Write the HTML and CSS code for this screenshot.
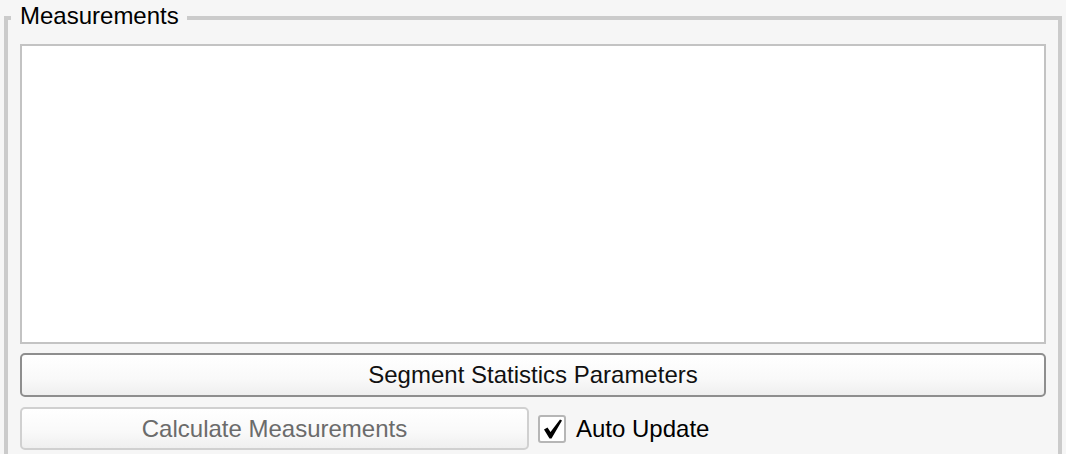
FILE: index.html
```html
<!DOCTYPE html>
<html>
<head>
<meta charset="utf-8">
<link rel="stylesheet" href="styles.css">
</head>
<body>
<fieldset class="group">
  <legend class="group-title">Measurements</legend>
  <div class="list-box"></div>
  <button class="btn btn-primary">Segment Statistics Parameters</button>
  <div class="row">
    <button class="btn btn-disabled" disabled>Calculate Measurements</button>
    <label class="check">
      <span class="check-box">
        <svg width="24" height="24" viewBox="0 0 24 24"><path d="M4 12.5 L7.5 10.5 L10.5 15 L20 2.5 L22 3.5 L11.5 21.5 L9.5 21.5 Z" fill="#000"/></svg>
      </span>
      <span class="check-label">Auto Update</span>
    </label>
  </div>
</fieldset>
</body>
</html>
```

FILE: styles.css
```css
html, body {
  margin: 0;
  padding: 0;
  background: #f6f6f6;
  height: 100%;
  overflow: hidden;
}
body {
  font-family: "Liberation Sans", Arial, Helvetica, sans-serif;
  font-size: 24px;
  color: #000;
}
.group {
  margin: 0 4px;
  padding: 8px 12px 0 12px;
  border: 4px solid #cbcbcb;
  border-bottom: none;
  height: 454px;
  display: flex;
  flex-direction: column;
  box-sizing: border-box;
}
.group-title {
  margin-left: -9px;
  padding: 2px 8px 6px 9px;
  line-height: 28px;
  font-size: 24px;
}
.list-box {
  height: 300px;
  box-sizing: border-box;
  background: #fff;
  border: 2px solid #c3c3c3;
}
.btn {
  font-family: inherit;
  font-size: 24px;
  box-sizing: border-box;
  height: 44px;
  border-radius: 5px;
  background: linear-gradient(#ffffff, #f9f9f9 60%, #efefef);
  padding: 0;
  margin: 0;
}
.btn-primary {
  margin-top: 9px;
  width: 100%;
  border: 2px solid #8e8e8e;
  color: #111;
}
.row {
  margin-top: 10px;
  display: flex;
  align-items: center;
  gap: 9px;
}
.btn-disabled {
  width: 509px;
  height: 43px;
  border: 2px solid #d0d0d0;
  color: #6b6b6b;
}
.check {
  display: flex;
  align-items: center;
  gap: 10px;
}
.check-box {
  width: 28px;
  height: 28px;
  box-sizing: border-box;
  border: 2px solid #b6b6b6;
  border-radius: 3px;
  background: #fff;
  display: flex;
  align-items: center;
  justify-content: center;
}
.check-label {
  line-height: 28px;
}
```
